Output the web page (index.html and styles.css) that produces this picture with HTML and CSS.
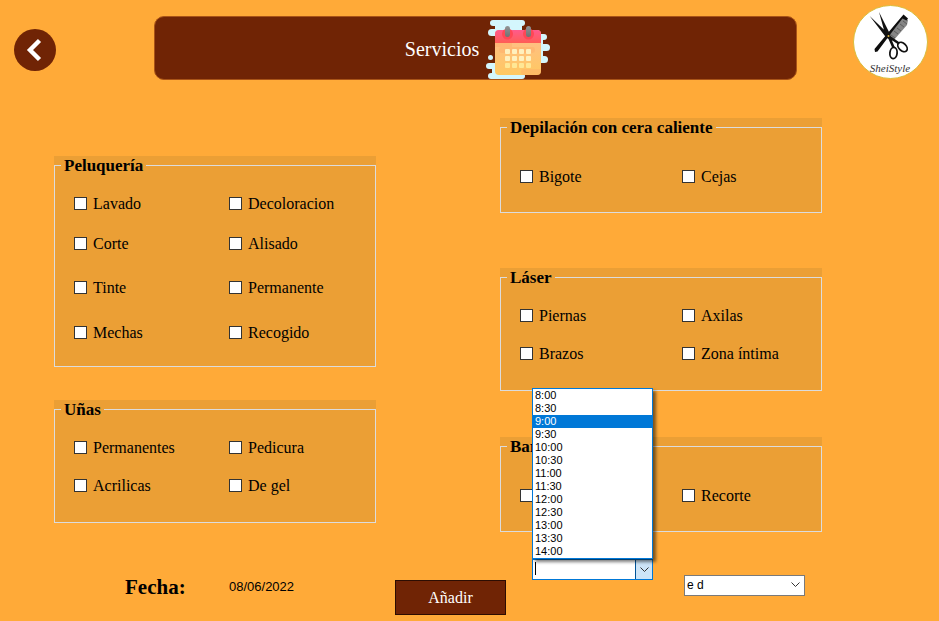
FILE: index.html
```html
<!DOCTYPE html>
<html lang="es">
<head>
<meta charset="utf-8">
<meta name="viewport" content="width=device-width, initial-scale=1">
<title>Servicios</title>
<link rel="stylesheet" href="styles.css">
</head>
<body>
<header class="top">
  <button class="back" type="button" aria-label="Volver">
    <svg width="42" height="42" viewBox="0 0 42 42" aria-hidden="true"><circle cx="21" cy="21" r="21" fill="#702405"/><path d="M25.500 11.500 16 21l9.500 9.500" fill="none" stroke="#fff" stroke-width="4.400"/></svg>
  </button>
  <div class="banner">
    <h1>Servicios</h1>
    <svg width="64" height="60" viewBox="0 0 64 60" aria-hidden="true">
      <defs>
        <linearGradient id="head" x2="0" y2="1"><stop offset="0" stop-color="#ff5a8c"/><stop offset="1" stop-color="#ff5d55"/></linearGradient>
        <linearGradient id="page" x2="0" y2="1"><stop offset="0" stop-color="#ffbd8e"/><stop offset="1" stop-color="#ffc861"/></linearGradient>
        <linearGradient id="ring" x2="0" y2="1"><stop offset="0" stop-color="#949494"/><stop offset="1" stop-color="#6f7273"/></linearGradient>
      </defs>
      <g fill="#d4f6fd">
        <rect x="4" y="1" width="35" height="6" rx="3"/>
        <path d="M9 5h27v8H9z"/>
        <rect x="2" y="10" width="20" height="7" rx="3.500"/>
        <path d="M50 18h7v22h-7z"/>
        <rect x="48" y="15" width="13" height="6" rx="3"/>
        <rect x="48" y="25" width="16" height="7" rx="3.500"/>
        <rect x="48" y="37" width="14" height="7" rx="3.500"/>
        <circle cx="4.500" cy="38.500" r="2.500"/>
        <rect x="0" y="44" width="16" height="6" rx="3"/>
        <path d="M6 48h30v8H6z"/>
        <rect x="2" y="54" width="37" height="6" rx="3"/>
      </g>
      <rect x="9" y="11" width="46" height="45" rx="4" fill="url(#page)"/>
      <path d="M9 24v-9a4 4 0 0 1 4-4h38a4 4 0 0 1 4 4v9z" fill="url(#head)"/>
      <path d="M9 24h17v4H9zM16 28h30a3 3 0 0 1 0 6H16a3 3 0 0 1 0-6M38 50h17v2a4 4 0 0 1-4 4H38a3 3 0 0 1 0-6" fill="#ffad68" opacity=".45"/>
      <circle cx="21.500" cy="15" r="5.500" fill="#ff4755"/><circle cx="42.500" cy="15" r="5.500" fill="#ff4755"/>
      <rect x="19" y="7" width="5" height="11" rx="2.500" fill="url(#ring)"/><rect x="40" y="7" width="5" height="11" rx="2.500" fill="url(#ring)"/>
      <g fill="#fff0bd">
        <rect x="19" y="30" width="5" height="5" rx="1"/><rect x="26" y="30" width="5" height="5" rx="1"/><rect x="33" y="30" width="5" height="5" rx="1"/><rect x="40" y="30" width="5" height="5" rx="1"/>
        <rect x="19" y="37" width="5" height="5" rx="1"/><rect x="26" y="37" width="5" height="5" rx="1"/><rect x="33" y="37" width="5" height="5" rx="1"/><rect x="40" y="37" width="5" height="5" rx="1"/>
        <g fill="#ffe795"><rect x="19" y="44" width="5" height="5" rx="1"/><rect x="26" y="44" width="5" height="5" rx="1"/><rect x="33" y="44" width="5" height="5" rx="1"/><rect x="40" y="44" width="5" height="5" rx="1"/></g>
      </g>
    </svg>
  </div>
  <svg class="logo" width="75" height="74" viewBox="0 0 75 74" role="img" aria-label="SheiStyle">
    <ellipse cx="37.500" cy="37" rx="37" ry="36.500" fill="#fff" stroke="#d9bd3c"/>
    <path d="M50 12l5 3-1 5-14 16-5-4z" fill="#858585"/>
    <path d="M50 16l4 3M47 19l4 3M44 23l4 3M41 26l4 3M38 30l4 3" stroke="#5c5c5c"/>
    <path d="M50.500 9.500l4.500 4-1.500 2-4-2L36 31 24.500 46.500l-2.500.5-.5-3L34 29z" fill="#0d0d0d"/>
    <path d="M26 7l11.500 23-2 3.500-3-3zM16.700 11L37.500 31l-1 3-3-1z" fill="#111"/>
    <path d="M35 29.500l5.500 13M35 31l11 7.500" stroke="#111" stroke-width="2.600"/>
    <circle cx="35.500" cy="31" r="1" fill="#d8b13c"/>
    <g fill="none" stroke="#111" stroke-width="1.800"><ellipse cx="40.500" cy="48" rx="3.600" ry="5.600" transform="rotate(6 40.500 48)"/><ellipse cx="49.500" cy="42" rx="3.600" ry="5.600" transform="rotate(-45 49.500 42)"/></g>
    <text class="signature" x="37" y="67" text-anchor="middle">SheiStyle</text>
  </svg>
</header>

<form>
  <main class="services">
    <div class="column column-left">
      <div class="group"><fieldset class="tall">
        <legend>Peluquería</legend>
        <div class="options">
          <label><input type="checkbox">Lavado</label><label><input type="checkbox">Decoloracion</label>
          <label><input type="checkbox">Corte</label><label><input type="checkbox">Alisado</label>
          <label><input type="checkbox">Tinte</label><label><input type="checkbox">Permanente</label>
          <label><input type="checkbox">Mechas</label><label><input type="checkbox">Recogido</label>
        </div>
      </fieldset></div>
      <div class="group"><fieldset>
        <legend>Uñas</legend>
        <div class="options">
          <label><input type="checkbox">Permanentes</label><label><input type="checkbox">Pedicura</label>
          <label><input type="checkbox">Acrilicas</label><label><input type="checkbox">De gel</label>
        </div>
      </fieldset></div>
    </div>
    <div class="column column-right">
      <div class="group"><fieldset class="single">
        <legend>Depilación con cera caliente</legend>
        <div class="options">
          <label><input type="checkbox">Bigote</label><label><input type="checkbox">Cejas</label>
        </div>
      </fieldset></div>
      <div class="group laser"><fieldset>
        <legend>Láser</legend>
        <div class="options">
          <label><input type="checkbox">Piernas</label><label><input type="checkbox">Axilas</label>
          <label><input type="checkbox">Brazos</label><label><input type="checkbox">Zona íntima</label>
        </div>
      </fieldset></div>
      <div class="group"><fieldset class="single">
        <legend>Barba</legend>
        <div class="options">
          <label><input type="checkbox" aria-label="Barba"></label><label><input type="checkbox">Recorte</label>
        </div>
      </fieldset></div>
    </div>
  </main>

  <footer class="booking">
    <div class="date"><span class="date-label">Fecha:</span><time datetime="2022-06-08">08/06/2022</time></div>
    <button class="add" type="button">Añadir</button>
    <div class="combo">
      <input type="text" role="combobox" aria-label="Hora" aria-expanded="true" aria-controls="hours">
      <span class="caret"></span>
      <button type="button" aria-label="Mostrar horas"><svg width="9" height="6" viewBox="0 0 9 6" aria-hidden="true"><path d="M.5.500l4 4 4-4" fill="none" stroke="#333"/></svg></button>
      <ul id="hours" role="listbox" aria-label="Horas">
        <li role="option">8:00</li><li role="option">8:30</li><li role="option" aria-selected="true">9:00</li><li role="option">9:30</li><li role="option">10:00</li><li role="option">10:30</li><li role="option">11:00</li><li role="option">11:30</li><li role="option">12:00</li><li role="option">12:30</li><li role="option">13:00</li><li role="option">13:30</li><li role="option">14:00</li>
      </ul>
    </div>
    <div class="picker">
      <select aria-label="Empleado"><option>e d</option></select>
      <svg width="9" height="6" viewBox="0 0 9 6" aria-hidden="true"><path d="M.5.500l4 4 4-4" fill="none" stroke="#333"/></svg>
    </div>
  </footer>
</form>
</body>
</html>
```
FILE: styles.css
```css
* { box-sizing: border-box; }

body {
  margin: 0;
  background: #ffaa38;
  color: #000;
  font: 16px/19px "Liberation Serif", serif;
}

button, input, select { margin: 0; padding: 0; font: inherit; border-radius: 0; }

.top {
  display: flex;
  align-items: flex-start;
  padding: 5px 11px 0 14px;
}

.back {
  width: 42px;
  height: 42px;
  margin: 24px 98px 0 0;
  border: 0;
  background: none;
}

.back svg { display: block; }

.banner {
  flex: 1;
  display: flex;
  align-items: center;
  justify-content: center;
  gap: 7px;
  height: 64px;
  margin: 11px 56px 0 0;
  padding: 2px 0 0 4px;
  border: 1px solid #a85317;
  border-radius: 10px;
  background: #702405;
}

.banner h1 {
  margin: 0;
  color: #fff;
  font-size: 20px;
  font-weight: 400;
}

.signature {
  fill: #333;
  font: italic 11px "Liberation Serif", serif;
}

.services {
  display: grid;
  grid-template-columns: 1fr 1fr;
  gap: 124px;
  padding: 38px 117px 0 54px;
}

.column-left { padding-top: 38px; }
.column-left .group + .group { margin-top: 33px; }
.column-right .laser { margin: 55px 0 46px; }

.group { background: #eb9f35; }

fieldset {
  min-width: 0;
  margin: 0;
  padding: 9px 0 18px 19px;
  border: 1px solid #dcdcdc;
}

fieldset.single { padding-top: 20px; padding-bottom: 17px; }
fieldset.tall { padding-bottom: 12px; }

legend {
  margin-left: -13px;
  padding: 0 3px;
  font-size: 17px;
  font-weight: 700;
}

.options {
  display: grid;
  grid-template-columns: 155px 1fr;
  grid-auto-rows: 38px;
}

.column-right .options { grid-template-columns: 162px 1fr; }
.tall .options { grid-template-rows: 38px 42px 46px 44px; }

.options label {
  display: flex;
  align-items: center;
  gap: 6px;
}

input[type="checkbox"] {
  appearance: none;
  width: 13px;
  height: 13px;
  border: 1px solid #333;
  background: #fff;
}

input[type="checkbox"]:checked { background: #702405; }

.booking {
  display: flex;
  align-items: flex-start;
  padding: 27px 0 0 125px;
}

.date {
  display: flex;
  align-items: center;
  width: 270px;
  margin-top: 16px;
}

.date-label {
  width: 104px;
  font-size: 21px;
  font-weight: 700;
  line-height: 24px;
}

.date time { font: 13px/24px "Liberation Sans", sans-serif; }

.add {
  width: 111px;
  height: 35px;
  margin: 21px 26px 0 0;
  border: 1px solid #2d0d02;
  background: #702405;
  color: #fff;
}

.combo {
  position: relative;
  display: flex;
  width: 121px;
  height: 21px;
  margin-right: 31px;
  border: 1px solid #0078d7;
  font: 11px/13px "Liberation Sans", sans-serif;
}

.combo input {
  flex: 1;
  min-width: 0;
  padding: 0 2px;
  border: 0;
  outline: 0;
  background: #fff;
}

.caret {
  position: absolute;
  top: 2px;
  left: 2px;
  width: 1px;
  height: 13px;
  background: #000;
}

.combo button {
  display: flex;
  align-items: center;
  justify-content: center;
  width: 17px;
  border: 0;
  border-left: 1px solid #005499;
  background: #cce4f7;
}

.combo ul {
  position: absolute;
  bottom: calc(100% + 1px);
  left: -1px;
  right: -1px;
  margin: 0;
  padding: 0;
  border: 1px solid #0078d7;
  background: #fff;
  box-shadow: 3px 3px 3px rgba(0, 0, 0, 0.5);
  list-style: none;
}

.combo li { padding-left: 2px; }
.combo li[aria-selected="true"] { background: #0078d7; color: #fff; }

.picker {
  position: relative;
  width: 121px;
  height: 21px;
  margin-top: 15px;
}

.picker select {
  appearance: none;
  width: 100%;
  height: 100%;
  padding-left: 2px;
  border: 1px solid #7a7a7a;
  background: #fff;
  color: #000;
  font: 12px/19px "Liberation Sans", sans-serif;
}

.picker svg {
  position: absolute;
  top: 8px;
  right: 5px;
  pointer-events: none;
}
```
